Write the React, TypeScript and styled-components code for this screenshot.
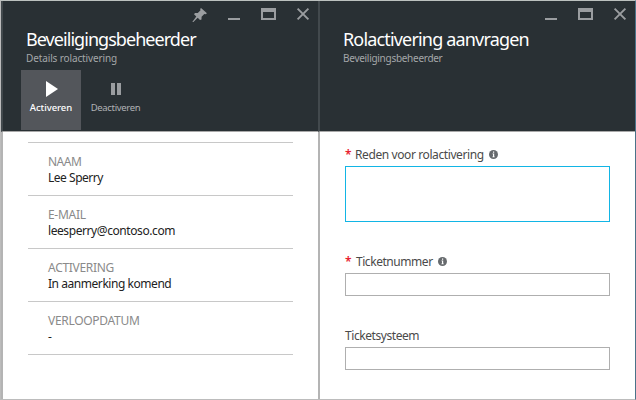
import React from "react";
import styled, { createGlobalStyle } from "styled-components";

const GlobalStyle = createGlobalStyle`
  * { box-sizing: border-box; }
  body { margin: 0; font-family: "Noto Sans", "Open Sans", sans-serif; background: #fff; }
`;

const Window = styled.div`
  width: 636px;
  height: 400px;
  display: flex;
  border-top: 1px solid #bcc1bf;
  border-bottom: 1px solid #bcbcbc;
  border-left: 1px solid #bcbcbc;
  border-right: 1px solid #4a7389;
`;

const Blade = styled.section`
  width: 317px;
  height: 398px;
  display: flex;
  flex-direction: column;
`;

const Header = styled.header`
  height: 131px;
  flex: none;
  background: #293034;
  border-bottom: 1px solid #a9a9a9;
  border-left: 2px solid #42494d;
  display: flex;
  flex-direction: column;
`;

const Body = styled.div<{ $pad: string }>`
  flex: 1;
  background: #fff;
  border-left: 2px solid #b4b4b4;
  padding: ${(p) => p.$pad};
`;

const Controls = styled.div`
  height: 26px;
  padding: 5px 5px 0 0;
  display: flex;
  justify-content: flex-end;
  gap: 17px;
  color: #9a9da0;
  svg { display: block; width: 18px; height: 18px; }
`;

const Title = styled.h1<{ $spacing: number }>`
  margin: 0 0 0 23px;
  font-size: 18px;
  line-height: 24px;
  font-weight: 400;
  letter-spacing: ${(p) => p.$spacing}px;
  color: #fff;
  white-space: nowrap;
`;

const Subtitle = styled.div<{ $spacing: number }>`
  margin-left: 23px;
  font-size: 10px;
  line-height: 14px;
  letter-spacing: ${(p) => p.$spacing}px;
  color: #a4a7a9;
  white-space: nowrap;
`;

const Toolbar = styled.div`
  display: flex;
  margin: 5px 0 0 18px;
`;

const Command = styled.button<{ $active?: boolean }>`
  width: ${(p) => (p.$active ? 60 : 69)}px;
  height: 60px;
  padding: 9px 0 0;
  border: 0;
  background: ${(p) => (p.$active ? "#53565b" : "transparent")};
  color: ${(p) => (p.$active ? "#fff" : "#b0b2b4")};
  font-family: inherit;
  font-size: 9.5px;
  font-weight: ${(p) => (p.$active ? 500 : 400)};
  line-height: 14px;
  letter-spacing: ${(p) => (p.$active ? -0.05 : -0.32)}px;
  display: flex;
  flex-direction: column;
  align-items: center;
  gap: 2px;
  svg { display: block; width: 20px; height: 20px; }
`;

const Details = styled.dl`
  margin: 0;
  border-top: 1px solid #c8c8c8;
`;

const Detail = styled.div`
  height: 53px;
  padding: 11px 0 0 20px;
  border-bottom: 1px solid #c8c8c8;
`;

const Term = styled.dt<{ $spacing: number }>`
  font-size: 12px;
  line-height: 16px;
  letter-spacing: ${(p) => p.$spacing}px;
  color: #8a8a8a;
`;

const Value = styled.dd<{ $spacing: number }>`
  margin: 0;
  font-size: 12px;
  line-height: 16px;
  letter-spacing: ${(p) => p.$spacing}px;
  color: #222;
`;

const Label = styled.label`
  height: 18px;
  display: flex;
  align-items: center;
  font-size: 12px;
  line-height: 18px;
  color: #4a4a4a;
  white-space: nowrap;
  svg { width: 9px; height: 9px; margin: 0 0 1px 5px; }
`;

const LabelText = styled.span<{ $spacing: number }>`
  letter-spacing: ${(p) => p.$spacing}px;
`;

const Required = styled.span<{ $width: number }>`
  width: ${(p) => p.$width}px;
  color: #e8212f;
  font-size: 12px;
  font-weight: 600;
`;

const Reason = styled.textarea`
  display: block;
  width: 265px;
  height: 56px;
  margin: 2px 0 31px;
  border: 1px solid #12b5e5;
  border-radius: 0;
  background: #fff;
  resize: none;
  outline: 0;
`;

const Input = styled.input`
  display: block;
  width: 265px;
  height: 23px;
  margin: 2px 0 31px;
  border: 1px solid #afafaf;
  border-radius: 0;
  background: #fff;
  &:last-child { margin-bottom: 0; }
`;

const Pin = () => (
  <svg viewBox="0 0 18 18" fill="currentColor">
    <path d="M11 2 17 7.2 15.6 8.2 14.3 8 11.6 10.7 11.5 13.4 10 14 7.7 11.8 3.4 16 2.3 16 6.3 10.4 4 8.2 5 7 7.8 7 10.5 4.3 10.2 3z" />
  </svg>
);

const WindowIcons = () => (
  <>
    <svg viewBox="0 0 18 18"><path d="M3 12h12v2H3z" fill="currentColor" /></svg>
    <svg viewBox="0 0 18 18"><path fillRule="evenodd" d="M1 2h15v12H1zM3 6v6h11V6z" fill="currentColor" /></svg>
    <svg viewBox="0 0 18 18"><path d="M2.6 2.6 13.4 13.4M13.4 2.6 2.6 13.4" fill="none" stroke="currentColor" strokeWidth="1.9" /></svg>
  </>
);

const Info = () => (
  <svg viewBox="0 0 9 9">
    <circle cx="4.5" cy="4.5" r="4.5" fill="#666a6d" />
    <path d="M4 1.5h1.2v1.2H4zM3.5 3.6h1.7v3h.5v.7H3.4v-.7H4V4.3h-.5z" fill="#fff" />
  </svg>
);

const details = [
  { term: "NAAM", value: "Lee Sperry", ts: -0.5, vs: -0.48 },
  { term: "E-MAIL", value: "leesperry@contoso.com", ts: -0.3, vs: -0.42 },
  { term: "ACTIVERING", value: "In aanmerking komend", ts: -0.3, vs: -0.45 },
  { term: "VERLOOPDATUM", value: "-", ts: -0.3, vs: 0 },
];

export default function App() {
  return (
    <>
      <GlobalStyle />
      <Window>
        <Blade>
          <Header>
            <Controls><Pin /><WindowIcons /></Controls>
            <Title $spacing={-0.95}>Beveiligingsbeheerder</Title>
            <Subtitle $spacing={-0.12}>Details rolactivering</Subtitle>
            <Toolbar>
              <Command $active>
                <svg viewBox="0 0 20 20"><path d="M5 2 17 10 5 18z" fill="#fff" /></svg>
                Activeren
              </Command>
              <Command>
                <svg viewBox="0 0 20 20"><path d="M5 4h4v12H5zM11 4h4v12h-4z" fill="#9a9da0" /></svg>
                Deactiveren
              </Command>
            </Toolbar>
          </Header>
          <Body $pad="10px 25px 0">
            <Details>
              {details.map((d) => (
                <Detail key={d.term}>
                  <Term $spacing={d.ts}>{d.term}</Term>
                  <Value $spacing={d.vs}>{d.value}</Value>
                </Detail>
              ))}
            </Details>
          </Body>
        </Blade>
        <Blade>
          <Header>
            <Controls><WindowIcons /></Controls>
            <Title $spacing={-0.83}>Rolactivering aanvragen</Title>
            <Subtitle $spacing={-0.28}>Beveiligingsbeheerder</Subtitle>
          </Header>
          <Body $pad="14px 25px 0">
            <Label htmlFor="reason"><Required $width={10}>*</Required><LabelText $spacing={-0.4}>Reden voor rolactivering</LabelText><Info /></Label>
            <Reason id="reason" />
            <Label htmlFor="ticket"><Required $width={11}>*</Required><LabelText $spacing={-0.45}>Ticketnummer</LabelText><Info /></Label>
            <Input id="ticket" />
            <Label htmlFor="system"><LabelText $spacing={-0.43}>Ticketsysteem</LabelText></Label>
            <Input id="system" />
          </Body>
        </Blade>
      </Window>
    </>
  );
}
